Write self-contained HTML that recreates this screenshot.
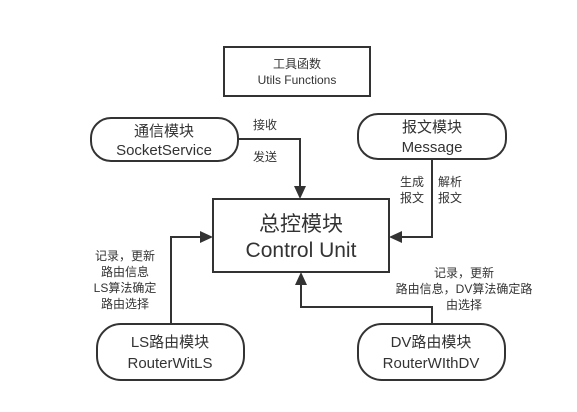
<!DOCTYPE html>
<html><head><meta charset="utf-8"><style>
html,body{margin:0;padding:0;background:#fff;}
svg{display:block;}
text{font-family:"Liberation Sans","Noto Sans CJK SC",sans-serif;fill:#333;}
</style></head><body>
<svg width="577" height="412" viewBox="0 0 577 412" xmlns="http://www.w3.org/2000/svg">
<g fill="none" stroke="#333" stroke-width="2">
<rect x="224" y="47" width="146" height="49"/>
<rect x="91" y="118" width="147" height="43" rx="20"/>
<rect x="358" y="114" width="148" height="45" rx="20"/>
<rect x="213" y="199" width="176" height="73"/>
<rect x="97" y="324" width="147" height="56" rx="24"/>
<rect x="358" y="324" width="147" height="56" rx="24"/>
<polyline points="238,139 300,139 300,188"/>
<polyline points="432,159 432,237 400,237"/>
<polyline points="171,324 171,237 202,237"/>
<polyline points="432,324 432,307 301,307 301,283"/>
</g>
<g fill="#333">
<polygon points="294,186 306,186 300,199"/>
<polygon points="402,231 402,243 389,237"/>
<polygon points="200,231 200,243 213,237"/>
<polygon points="295,285 307,285 301,272"/>
</g>
<g text-anchor="middle">
<text x="297" y="68" font-size="12">工具函数</text>
<text x="297" y="84" font-size="12">Utils Functions</text>
<text x="164" y="136" font-size="15">通信模块</text>
<text x="164" y="155" font-size="15">SocketService</text>
<text x="432" y="132" font-size="15">报文模块</text>
<text x="432" y="152" font-size="15">Message</text>
<text x="301" y="231" font-size="21">总控模块</text>
<text x="301" y="257" font-size="21">Control Unit</text>
<text x="170" y="347" font-size="15">LS路由模块</text>
<text x="170" y="368" font-size="15">RouterWitLS</text>
<text x="431" y="347" font-size="15">DV路由模块</text>
<text x="431" y="368" font-size="15">RouterWIthDV</text>
<text x="265" y="129" font-size="12">接收</text>
<text x="265" y="161" font-size="12">发送</text>
<text x="412" y="186" font-size="12">生成</text>
<text x="412" y="202" font-size="12">报文</text>
<text x="450" y="186" font-size="12">解析</text>
<text x="450" y="202" font-size="12">报文</text>
<text x="125" y="260" font-size="12">记录，更新</text>
<text x="125" y="276" font-size="12">路由信息</text>
<text x="125" y="292" font-size="12">LS算法确定</text>
<text x="125" y="308" font-size="12">路由选择</text>
<text x="464" y="277" font-size="12">记录，更新</text>
<text x="464" y="293" font-size="12">路由信息，DV算法确定路</text>
<text x="464" y="309" font-size="12">由选择</text>
</g>
</svg>
</body></html>
